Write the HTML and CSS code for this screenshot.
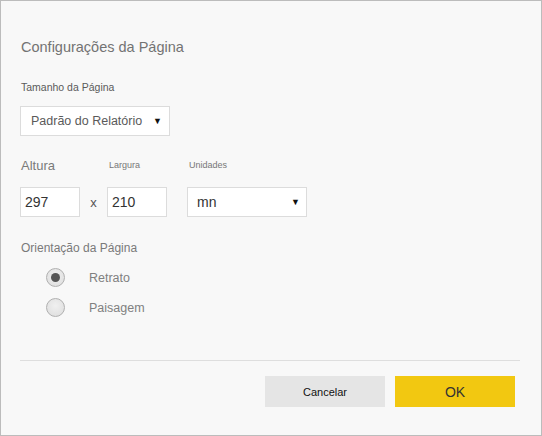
FILE: index.html
```html
<!DOCTYPE html>
<html lang="pt">
<head>
<meta charset="utf-8">
<link rel="stylesheet" href="styles.css">
</head>
<body>
<div class="dialog">
  <div class="title">Configurações da Página</div>
  <div class="label-sm size-label">Tamanho da Página</div>
  <div class="select size-select"><span>Padrão do Relatório</span><span class="arrow">▼</span></div>
  <div class="dims">
    <div class="col col-h">
      <div class="label-lg">Altura</div>
      <div class="input w60">297</div>
    </div>
    <div class="times">x</div>
    <div class="col col-w">
      <div class="label-xs">Largura</div>
      <div class="input w60">210</div>
    </div>
    <div class="col col-u">
      <div class="label-xs">Unidades</div>
      <div class="select unit-select"><span>mn</span><span class="arrow">▼</span></div>
    </div>
  </div>
  <div class="label-md orient-label">Orientação da Página</div>
  <div class="radios">
    <div class="radio-row"><span class="radio checked"></span><span class="radio-text">Retrato</span></div>
    <div class="radio-row"><span class="radio"></span><span class="radio-text">Paisagem</span></div>
  </div>
  <div class="divider"></div>
  <div class="buttons">
    <div class="btn btn-cancel">Cancelar</div>
    <div class="btn btn-ok">OK</div>
  </div>
</div>
</body>
</html>
```

FILE: styles.css
```css
* { box-sizing: border-box; }
html, body { margin: 0; padding: 0; }
body { font-family: "Liberation Sans", Arial, sans-serif; }
.dialog {
  width: 542px;
  height: 436px;
  background: #f8f8f8;
  border: 1px solid #bcbcbc;
  padding: 0 21px 0 19px;
  color: #666;
}
.title {
  margin-top: 37px;
  font-size: 14.5px;
  line-height: 18px;
  height: 18px;
  padding-left: 1px;
  color: #737373;
}
.label-sm { font-size: 10.5px; line-height: 13px; padding-left: 1px; color: #5a5a5a; }
.size-label { margin-top: 25px; }
.select {
  display: flex;
  align-items: center;
  justify-content: space-between;
  background: #fff;
  border: 1px solid #dcdcdc;
  height: 30px;
  font-size: 12.5px;
  color: #5a5a5a;
}
.size-select { margin-top: 12px; width: 150px; padding: 0 7px 0 10px; }
.arrow { font-size: 9px; color: #111; }
.dims { display: flex; align-items: flex-end; margin-top: 22px; }
.col { display: flex; flex-direction: column; }
.label-lg { font-size: 13px; line-height: 15px; padding-left: 1px; color: #7a7a7a; margin-bottom: 14px; }
.label-xs { font-size: 9px; line-height: 12px; padding-left: 2px; color: #777; margin-bottom: 16px; }
.input {
  background: #fff;
  border: 1px solid #dcdcdc;
  height: 30px;
  display: flex;
  align-items: center;
  padding-left: 4px;
  font-size: 14px;
  color: #333;
}
.w60 { width: 60px; }
.times { width: 27px; height: 30px; display: flex; align-items: center; justify-content: center; font-size: 13px; color: #555; }
.col-u { margin-left: 20px; }
.unit-select { width: 120px; padding: 0 6px 0 9px; color: #333; font-size: 14px; }
.label-md { font-size: 12px; line-height: 14px; padding-left: 1px; color: #7a7a7a; }
.orient-label { margin-top: 24px; }
.radios { margin-top: 13px; padding-left: 26px; display: flex; flex-direction: column; gap: 11px; }
.radio-row { display: flex; align-items: center; height: 19px; }
.radio {
  width: 19px; height: 19px; border-radius: 50%;
  border: 1px solid #b0b0b0;
  background: radial-gradient(circle at 50% 40%, #f0f0f0, #dcdcdc);
  display: flex; align-items: center; justify-content: center;
}
.radio.checked::after {
  content: ""; width: 9px; height: 9px; border-radius: 50%; background: #555;
}
.radio-text { margin-left: 24px; font-size: 12.5px; color: #808080; }
.divider { margin-top: 43px; height: 1px; background: #dedede; }
.buttons { display: flex; justify-content: flex-end; gap: 10px; margin-top: 15px; padding-right: 5px; }
.btn { width: 120px; height: 31px; display: flex; align-items: center; justify-content: center; }
.btn-cancel { background: #e5e5e5; color: #111; font-size: 11px; }
.btn-ok { background: #f2c811; color: #333; font-size: 14px; }
```
